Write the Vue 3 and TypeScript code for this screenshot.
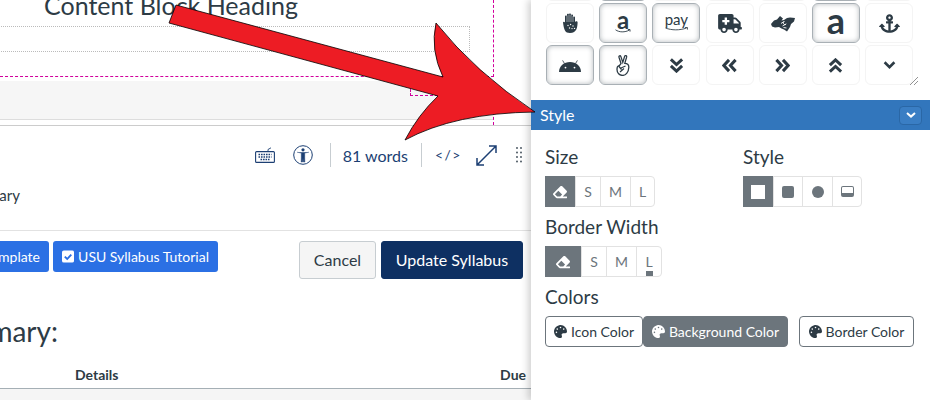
<template>
  <div class="page">
    <!-- Left side: rich content editor and page below it -->
    <main class="editor-col">
      <section class="editor">
        <div class="frame">
          <h2 class="block-heading">Content Block Heading</h2>
          <div class="dotted-block"></div>
        </div>
        <div class="lower">
          <div class="gray-block"></div>
          <div class="handle"></div>
        </div>
      </section>

      <div class="toolbar">
        <svg class="tb-keyboard" viewBox="0 0 20 16" width="20" height="16">
          <path d="M13 4V2.5L16 .8" fill="none" stroke="#1c3f73" stroke-width=".9" />
          <rect x=".6" y="4.6" width="18.8" height="10.8" rx="1" fill="none" stroke="#1c3f73" stroke-width="1.1" />
          <path d="M3.5 7.5h13M3.5 10h13M5.5 12.6h9" stroke="#1c3f73" stroke-width="1.5" stroke-dasharray="1.6 .9" />
        </svg>
        <svg class="tb-access" viewBox="0 0 20 20" width="20" height="20">
          <circle cx="10" cy="10" r="9.3" fill="none" stroke="#1c3f73" stroke-width="1" />
          <circle cx="10" cy="4.8" r="1.6" fill="#1c3f73" />
          <path d="M4 7.2L8.3 8V12.6L8.2 17H9.6L10 13L10.4 17H11.8L11.7 12.6V8L16 7.2" fill="#1c3f73" stroke="#1c3f73" stroke-width=".5" />
        </svg>
        <span class="tb-sep first"></span>
        <span class="tb-words">81 words</span>
        <span class="tb-sep second"></span>
        <span class="tb-code">&lt;/&gt;</span>
        <svg class="tb-expand" viewBox="0 0 21 21" width="21" height="21">
          <path d="M20 8V1H13M1 13V20H8M20 1L1 20" fill="none" stroke="#1c3f73" stroke-width="1.5" />
        </svg>
        <svg class="tb-grip" viewBox="0 0 6 16" width="6" height="16">
          <g fill="#3d4a55">
            <circle v-for="y in gripRows" :key="'l' + y" cx="1" :cy="y" r=".9" />
            <circle v-for="y in gripRows" :key="'r' + y" cx="5" :cy="y" r=".9" />
          </g>
        </svg>
      </div>

      <div class="path-row"><span>Summary</span></div>

      <div class="actions">
        <div class="actions-left">
          <div class="template-slot">
            <button class="btn-blue">USU Syllabus Template</button>
          </div>
          <button class="btn-blue tutorial">
            <svg viewBox="0 0 13 13" width="13" height="13">
              <rect width="13" height="13" rx="2" fill="#fff" />
              <path d="M3 6.6L5.6 9.2L10 4.4" fill="none" stroke="#2b70e4" stroke-width="2" />
            </svg>
            USU Syllabus Tutorial
          </button>
        </div>
        <div class="actions-right">
          <button class="btn-cancel">Cancel</button>
          <button class="btn-update">Update Syllabus</button>
        </div>
      </div>

      <div class="summary-title"><h2>Course Summary:</h2></div>

      <div class="table-head">
        <span>Details</span>
        <span>Due</span>
      </div>
      <div class="table-body"></div>
    </main>

    <!-- Right side: icon settings panel -->
    <aside class="panel">
      <div class="icon-scroll">
        <div class="icon-grid">
          <div v-for="n in 7" :key="n" class="cell" :class="{ active: n === 2 || n === 6 }"></div>

          <!-- row 1 -->
          <div class="cell">
            <svg viewBox="0 0 16 20" width="16" height="20">
              <path d="M1 9.5C1 8.5 2.6 8.3 3 9.5V3.5C3 2.3 5 2.3 5 3.5V1.6C5 .4 7 .4 7 1.6V1.4C7 .2 9 .2 9 1.4V2.4C9 1.2 11 1.2 11 2.4V4.5C11 3.3 13 3.3 13 4.5V9C13.5 7.8 15.8 8 15.6 9.5C15.4 14 15 20 8 20C3 20 2 17 1 9.5Z" fill="#2d3b45" />
              <path d="M5 2.5V9M7 1.5V9M9 1.5V9M11 3V9" stroke="#fff" stroke-width=".5" />
              <g fill="#fff">
                <circle cx="6" cy="12.5" r=".7" /><circle cx="8.6" cy="11.5" r=".7" /><circle cx="11" cy="13" r=".7" />
                <circle cx="7.5" cy="15" r=".7" /><circle cx="10" cy="15.6" r=".7" /><circle cx="12.5" cy="15.4" r=".7" />
              </g>
            </svg>
          </div>
          <div class="cell active stack">
            <span class="amz-a">a</span>
            <svg class="smile" viewBox="0 0 16 4" width="16" height="4">
              <path d="M.5 .8C4 3.4 10 3.6 14.5 1M12.8 .5H15V2.6" fill="none" stroke="#2d3b45" stroke-width=".9" />
            </svg>
          </div>
          <div class="cell active stack">
            <span class="amz-pay">pay</span>
            <svg class="smile" viewBox="0 0 24 4" width="23" height="4">
              <path d="M.5 1C7 3.4 15 3.6 22.5 1M20.8 .4H23.4V2.6" fill="none" stroke="#2d3b45" stroke-width=".9" />
            </svg>
          </div>
          <div class="cell">
            <svg viewBox="0 0 640 512" width="24" height="19">
              <path fill="#2d3b45" d="M624 352h-16V243.9c0-12.7-5.1-24.9-14.1-33.9L494 110.1c-9-9-21.2-14.1-33.9-14.1H416V48c0-26.5-21.5-48-48-48H48C21.5 0 0 21.5 0 48v320c0 26.5 21.5 48 48 48h16c0 53 43 96 96 96s96-43 96-96h128c0 53 43 96 96 96s96-43 96-96h48c8.8 0 16-7.2 16-16v-32c0-8.8-7.2-16-16-16zM160 464c-26.5 0-48-21.5-48-48s21.5-48 48-48 48 21.5 48 48-21.5 48-48 48zm144-248c0 4.4-3.6 8-8 8h-56v56c0 4.4-3.6 8-8 8h-48c-4.4 0-8-3.6-8-8v-56h-56c-4.4 0-8-3.6-8-8v-48c0-4.4 3.6-8 8-8h56v-56c0-4.4 3.6-8 8-8h48c4.4 0 8 3.6 8 8v56h56c4.4 0 8 3.6 8 8v48zm176 248c-26.5 0-48-21.5-48-48s21.5-48 48-48 48 21.5 48 48-21.5 48-48 48zm80-208H416V144h44.1l99.9 99.9V256z" />
            </svg>
          </div>
          <div class="cell">
            <svg viewBox="0 0 24 17" width="24" height="17">
              <path fill="#2d3b45" d="M0 9L3 5.5L6 4.5L9 1L12 3.5L10.5 5.5L13 5L16 3L19 2.5L24 3L23 6.5L20 9L19 12L16 16.5L13 14.5L10.5 13.5L8 12L4 12.5L1 11.5Z" />
              <path fill="none" stroke="#fff" stroke-width=".9" d="M10 8.5L13 6.5M11.5 11L15 9M13.5 6.5a1.6 1.6 0 1 0 1.8 2.4M12.5 12.5L15.5 13" />
            </svg>
          </div>
          <div class="cell active">
            <span class="big-a">a</span>
          </div>
          <div class="cell">
            <svg viewBox="0 0 576 512" width="21" height="19">
              <path fill="#2d3b45" d="M12.971 352h32.394C67.172 454.735 181.944 512 288 512c106.229 0 220.853-57.38 242.635-160h32.394c10.691 0 16.045-12.926 8.485-20.485l-67.029-67.029c-4.686-4.686-12.284-4.686-16.971 0l-67.029 67.029c-7.56 7.56-2.206 20.485 8.485 20.485h35.146c-20.29 54.317-84.963 86.588-144.117 94.015V256h52c6.627 0 12-5.373 12-12v-40c0-6.627-5.373-12-12-12h-52v-5.47c37.281-13.178 63.995-48.725 64-90.518C384.005 43.772 341.605.738 289.37.01 235.723-.739 192 42.525 192 96c0 41.798 26.716 77.35 64 90.53V192h-52c-6.627 0-12 5.373-12 12v40c0 6.627 5.373 12 12 12h52v190.015c-58.936-7.399-123.82-39.679-144.117-94.015h35.146c10.691 0 16.045-12.926 8.485-20.485l-67.029-67.029c-4.686-4.686-12.284-4.686-16.971 0L4.485 331.515C-3.074 339.074 2.28 352 12.971 352zM288 64c17.645 0 32 14.355 32 32s-14.355 32-32 32-32-14.355-32-32 14.355-32 32-32z" />
            </svg>
          </div>

          <!-- row 2 -->
          <div class="cell active">
            <svg viewBox="0 0 22 13" width="22" height="13">
              <path d="M0 13C0 7 5 3 11 3S22 7 22 13Z" fill="#2d3b45" />
              <path d="M5.5 4.6L3.6 1.4M16.5 4.6L18.4 1.4" stroke="#2d3b45" stroke-width=".8" />
              <circle cx="6.5" cy="8.6" r=".9" fill="#fff" /><circle cx="15.5" cy="8.6" r=".9" fill="#fff" />
            </svg>
          </div>
          <div class="cell active">
            <svg viewBox="0 0 14 21" width="14" height="21">
              <path d="M5 8.5L3 2.2C2.6 .6 4.4 .2 4.9 1.6L6.8 7.4L8.6 1.4C9.1 0 11 .5 10.6 2.2L8.8 8.4C11 8.5 13 9.5 12.8 12.5C12.6 17.5 9.5 20.4 6.5 20.4C3.5 20.4 1 18 1 14.5C1 13 1.2 11 2.6 10.8C4 10.6 4.5 9 5 8.5Z" fill="#fff" stroke="#2d3b45" stroke-width="1.3" />
              <path d="M2.6 11L5.5 14.5M5 13L9.5 11M4 17L8 13.5" fill="none" stroke="#2d3b45" stroke-width="1.2" />
            </svg>
          </div>
          <div v-for="c in chevrons" :key="c.name" class="cell">
            <svg viewBox="0 0 16 16" :width="c.w" :height="c.h">
              <path :d="c.d" fill="none" stroke="#2d3b45" stroke-width="3.2" />
            </svg>
          </div>
        </div>
        <svg class="resize" viewBox="0 0 8 8" width="8" height="8">
          <path d="M0 8L8 0M4 8L8 4" stroke="#777" stroke-width=".8" />
        </svg>
      </div>

      <div class="bar">
        <span>Style</span>
        <button class="bar-toggle" aria-label="Collapse">
          <svg viewBox="0 0 10 6" width="10" height="6">
            <path d="M1 1L5 4.6L9 1" fill="none" stroke="#fff" stroke-width="2" />
          </svg>
        </button>
      </div>

      <div class="panel-body">
        <div class="two-col">
          <div>
            <div class="field-label">Size</div>
            <div class="seg">
              <span class="seg-item on w-30">
                <svg viewBox="0 0 512 512" width="14" height="14"><path fill="#fff" :d="eraser" /></svg>
              </span>
              <span class="seg-item w-25">S</span>
              <span class="seg-item w-30">M</span>
              <span class="seg-item w-24">L</span>
            </div>
          </div>
          <div>
            <div class="field-label">Style</div>
            <div class="seg">
              <span class="seg-item on w-30"><i class="shape-square"></i></span>
              <span class="seg-item w-29"><i class="shape-rounded"></i></span>
              <span class="seg-item w-30"><i class="shape-circle"></i></span>
              <span class="seg-item w-29"><i class="shape-caption"></i></span>
            </div>
          </div>
        </div>

        <div class="field-label spaced">Border Width</div>
        <div class="seg">
          <span class="seg-item on w-36">
            <svg viewBox="0 0 512 512" width="14" height="14"><path fill="#fff" :d="eraser" /></svg>
          </span>
          <span class="seg-item w-25">S</span>
          <span class="seg-item w-30">M</span>
          <span class="seg-item w-25 with-bar">L</span>
        </div>

        <div class="field-label spaced">Colors</div>
        <div class="color-row">
          <button class="color-btn icon-color">
            <svg viewBox="0 0 512 512" width="13" height="13"><path fill="#2d3b45" :d="palette" /></svg>
            Icon Color
          </button>
          <button class="color-btn bg-color">
            <svg viewBox="0 0 512 512" width="13" height="13"><path fill="#fff" :d="palette" /></svg>
            Background Color
          </button>
          <button class="color-btn border-color">
            <svg viewBox="0 0 512 512" width="13" height="13"><path fill="#2d3b45" :d="palette" /></svg>
            Border Color
          </button>
        </div>
      </div>
    </aside>

    <!-- Annotation arrow drawn on top of the screenshot -->
    <svg class="arrow" viewBox="0 0 930 400" width="930" height="400">
      <path
        d="M176 5L443 77Q430 50 436 23Q475 72 535 112Q455 113 405 140Q418 115 438 96L169 23Z"
        fill="#ed1c24"
        stroke="#000"
        stroke-width=".8"
      />
    </svg>
  </div>
</template>

<script setup lang="ts">
  interface Chevron {
    name: string;
    d: string;
    w: number;
    h: number;
  }

  const gripRows: number[] = [1, 5.5, 10, 14.5];

  const chevrons: Chevron[] = [
    { name: 'double-down', d: 'M2 1.5L8 7L14 1.5M2 8.5L8 14L14 8.5', w: 15, h: 15 },
    { name: 'double-left', d: 'M7.5 2L2 8L7.5 14M14.5 2L9 8L14.5 14', w: 15, h: 15 },
    { name: 'double-right', d: 'M1.5 2L7 8L1.5 14M8.5 2L14 8L8.5 14', w: 15, h: 15 },
    { name: 'double-up', d: 'M2 7.5L8 2L14 7.5M2 14.5L8 9L14 14.5', w: 15, h: 15 },
    { name: 'down', d: 'M2 4L8 10L14 4', w: 13, h: 13 },
  ];

  const eraser =
    'M497.941 273.941c18.745-18.745 18.745-49.137 0-67.882l-160-160c-18.745-18.745-49.137-18.745-67.882 0l-256 256c-18.745 18.745-18.745 49.137 0 67.882l96 96A48.004 48.004 0 0 0 144 480h356c6.627 0 12-5.373 12-12v-40c0-6.627-5.373-12-12-12H355.883l142.058-142.059zm-302.627-62.627l137.373 137.373L265.373 416H150.628l-80-80 124.686-124.686z';

  const palette =
    'M204.3 5C104.9 24.4 24.8 104.3 5.2 203.4c-37 187 131.7 326.4 258.8 306.7 41.2-6.4 61.4-54.6 42.5-91.7-23.1-45.4 9.9-98.4 60.9-98.4h79.7c35.8 0 64.8-29.6 64.9-65.3C511.5 97.1 368.1-26.9 204.3 5zM96 320c-17.7 0-32-14.3-32-32s14.3-32 32-32 32 14.3 32 32-14.3 32-32 32zm32-128c-17.7 0-32-14.3-32-32s14.3-32 32-32 32 14.3 32 32-14.3 32-32 32zm128-64c-17.7 0-32-14.3-32-32s14.3-32 32-32 32 14.3 32 32-14.3 32-32 32zm128 64c-17.7 0-32-14.3-32-32s14.3-32 32-32 32 14.3 32 32-14.3 32-32 32z';
</script>

<style>
  html,
  body {
    margin: 0;
    overflow: hidden;
    background: #fff;
  }
</style>

<style scoped>
  .page {
    position: relative;
    display: flex;
    width: 930px;
    height: 400px;
    overflow: hidden;
    font-family: Lato, 'Liberation Sans', sans-serif;
    color: #2d3b45;
  }

  button {
    font-family: inherit;
    cursor: pointer;
  }

  /* ---------- editor column ---------- */
  .editor-col {
    width: 531px;
    flex: none;
    overflow: hidden;
    display: flex;
    flex-direction: column;
  }

  .editor {
    position: relative;
    height: 125px;
    flex: none;
    border-bottom: 1px solid #ccc;
  }

  .frame {
    display: flow-root;
    width: 493px;
    height: 76px;
    border-right: 1px dashed #d1009d;
    border-bottom: 1px dashed #d1009d;
  }

  .block-heading {
    margin: -8px 0 0 44px;
    height: 26px;
    font-size: 25px;
    line-height: 26px;
    font-weight: 400;
    white-space: nowrap;
  }

  .dotted-block {
    margin: 8px 0 0 -2px;
    width: 470px;
    height: 24px;
    border: 1px dotted #bbb;
  }

  .lower {
    margin-top: 4px;
    width: 493px;
    height: 44px;
    border-right: 1px dashed #d1009d;
  }

  .gray-block {
    height: 38px;
    background: #f6f6f6;
    border-bottom: 1px solid #ddd;
  }

  .handle {
    position: absolute;
    left: 410px;
    top: 81px;
    width: 82px;
    height: 13px;
    border-left: 1px dashed #d1009d;
    border-bottom: 1px dashed #d1009d;
    border-top: 1px dashed #d1009d;
  }

  .toolbar {
    height: 58px;
    flex: none;
    display: flex;
    align-items: center;
    justify-content: flex-end;
    padding-right: 9px;
    color: #1c3f73;
  }

  .tb-access {
    margin-left: 18px;
  }

  .tb-sep {
    width: 1px;
    height: 24px;
    background: #c7cdd1;
  }

  .tb-sep.first {
    margin-left: 17px;
  }

  .tb-sep.second {
    margin-left: 13px;
  }

  .tb-words {
    margin-left: 12px;
    font-size: 16px;
    white-space: nowrap;
  }

  .tb-code {
    margin: -2px 0 0 13px;
    font-size: 14px;
    letter-spacing: 1.5px;
    white-space: nowrap;
  }

  .tb-expand {
    margin-left: 14px;
  }

  .tb-grip {
    margin-left: 19px;
  }

  .path-row {
    width: 20px;
    height: 46px;
    flex: none;
    display: flex;
    justify-content: flex-end;
    padding-top: 3px;
    font-size: 15px;
    line-height: 17px;
    box-sizing: border-box;
  }

  .path-row span {
    white-space: nowrap;
  }

  .actions {
    height: 84px;
    flex: none;
    box-sizing: border-box;
    border-top: 1px solid #e2e2e2;
    padding: 10px 8px 0 0;
    display: flex;
    justify-content: space-between;
    align-items: flex-start;
  }

  .actions-left {
    display: flex;
    gap: 4px;
  }

  .template-slot {
    width: 49px;
    display: flex;
    justify-content: flex-end;
  }

  .btn-blue {
    flex: none;
    height: 31px;
    padding: 0 9px;
    border: none;
    border-radius: 3px;
    background: #2b70e4;
    color: #fff;
    font-size: 14px;
    white-space: nowrap;
    display: inline-flex;
    align-items: center;
    gap: 4px;
  }

  .btn-blue.tutorial {
    width: 165px;
  }

  .actions-right {
    display: flex;
    gap: 5px;
  }

  .btn-cancel,
  .btn-update {
    height: 38px;
    padding: 0 0 2px;
    border-radius: 3px;
    font-size: 16px;
    white-space: nowrap;
  }

  .btn-cancel {
    width: 77px;
    border: 1px solid #c7cdd1;
    background: #f5f5f5;
    color: #2d3b45;
  }

  .btn-update {
    width: 142px;
    border: 1px solid #0e3062;
    background: #0e3062;
    color: #fff;
  }

  .summary-title {
    width: 58px;
    height: 49px;
    flex: none;
    display: flex;
    justify-content: flex-end;
  }

  .summary-title h2 {
    margin: 0;
    flex: none;
    font-size: 28px;
    font-weight: 400;
    line-height: 34px;
    white-space: nowrap;
  }

  .table-head {
    height: 26px;
    flex: none;
    box-sizing: border-box;
    display: flex;
    justify-content: space-between;
    padding: 2px 5px 0 75px;
    font-size: 14px;
    font-weight: 700;
    line-height: 20px;
    border-bottom: 1px solid #a5afb5;
  }

  .table-body {
    flex: 1;
    background: #f5f5f5;
  }

  /* ---------- settings panel ---------- */
  .panel {
    position: relative;
    flex: 1;
    background: #fff;
    box-shadow: -3px 0 7px rgba(0, 0, 0, 0.18);
  }

  .icon-scroll {
    position: relative;
    height: 100px;
    overflow: hidden;
  }

  .icon-grid {
    display: grid;
    grid-template-columns: repeat(7, 48px);
    grid-auto-rows: 40px;
    column-gap: 5.2px;
    row-gap: 2px;
    margin: -39px 0 0 15px;
  }

  .cell {
    box-sizing: border-box;
    border: 1px solid #f4f4f4;
    border-radius: 6px;
    display: flex;
    align-items: center;
    justify-content: center;
  }

  .cell.active {
    border-color: #a9b0b5;
    box-shadow: inset 0 0 5px rgba(45, 59, 69, 0.35);
  }

  .cell.stack {
    flex-direction: column;
  }

  .amz-a {
    font-size: 24px;
    font-weight: 700;
    line-height: 18px;
    margin-top: -3px;
  }

  .amz-pay {
    font-size: 15px;
    line-height: 15px;
    margin-top: -3px;
  }

  .smile {
    display: block;
  }

  .big-a {
    font-size: 36px;
    font-weight: 700;
    line-height: 34px;
    margin-top: -6px;
  }

  .resize {
    position: absolute;
    left: 379px;
    top: 77px;
  }

  .bar {
    height: 30px;
    box-sizing: border-box;
    background: #3276bc;
    color: #fff;
    display: flex;
    align-items: center;
    justify-content: space-between;
    padding: 0 8px 0 9px;
    font-size: 16px;
  }

  .bar span {
    margin-top: -2px;
  }

  .bar-toggle {
    width: 23px;
    height: 19px;
    padding: 0;
    border: 1px solid #2a67a6;
    border-radius: 4px;
    background: #3a7ec4;
    display: flex;
    align-items: center;
    justify-content: center;
  }

  .panel-body {
    padding: 16px 14px 0;
  }

  .two-col {
    display: grid;
    grid-template-columns: 198px 1fr;
  }

  .field-label {
    height: 22px;
    margin-bottom: 8px;
    font-size: 19px;
    line-height: 22px;
  }

  .field-label.spaced {
    margin-top: 9px;
  }

  .seg {
    display: inline-flex;
    height: 31px;
    box-sizing: border-box;
    border: 1px solid #e2e2e2;
    border-radius: 4px;
    vertical-align: top;
  }

  .seg-item {
    position: relative;
    box-sizing: border-box;
    display: flex;
    align-items: center;
    justify-content: center;
    border-left: 1px solid #e2e2e2;
    font-size: 14px;
    color: #6c757c;
  }

  .seg-item.on {
    margin: -1px 0 -1px -1px;
    background: #6c757c;
    border-left: none;
  }

  .w-24 {
    width: 24px;
  }

  .w-25 {
    width: 25px;
  }

  .w-29 {
    width: 29px;
  }

  .w-30 {
    width: 30px;
  }

  .w-36 {
    width: 36px;
  }

  .with-bar::after {
    content: '';
    position: absolute;
    left: 9px;
    bottom: 0;
    width: 7px;
    height: 5px;
    background: #6c757c;
  }

  .shape-square {
    width: 14px;
    height: 14px;
    background: #fff;
  }

  .shape-rounded {
    width: 12px;
    height: 12px;
    border-radius: 2px;
    background: #6c757c;
  }

  .shape-circle {
    width: 12px;
    height: 12px;
    border-radius: 50%;
    background: #6c757c;
  }

  .shape-caption {
    box-sizing: border-box;
    width: 13px;
    height: 11px;
    border: 1px solid #6c757c;
    border-bottom-width: 4px;
    border-radius: 2px;
  }

  .color-row {
    display: flex;
  }

  .color-btn {
    box-sizing: border-box;
    height: 31px;
    padding: 0;
    display: inline-flex;
    align-items: center;
    justify-content: center;
    gap: 4px;
    border: 1px solid #6c757c;
    border-radius: 4px;
    background: #fff;
    color: #2d3b45;
    font-size: 14px;
    white-space: nowrap;
  }

  .icon-color {
    width: 98px;
  }

  .bg-color {
    width: 145px;
    background: #6c757c;
    color: #fff;
  }

  .border-color {
    width: 115px;
    margin-left: 11px;
  }

  /* ---------- annotation ---------- */
  .arrow {
    position: absolute;
    left: 0;
    top: 0;
    pointer-events: none;
  }
</style>
